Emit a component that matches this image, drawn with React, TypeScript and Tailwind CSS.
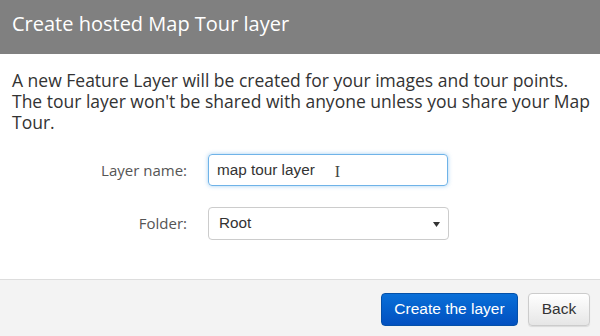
import React from "react";

export default function App() {
  return (
    <div className="w-[600px] h-[336px] bg-white flex flex-col overflow-hidden" style={{ fontFamily: '"Open Sans", sans-serif' }}>
      <div className="h-[54px] bg-[#808080] flex items-center px-[12px] shrink-0">
        <h1 className="text-white text-[20px] leading-none -mt-[6px]">Create hosted Map Tour layer</h1>
      </div>
      <div className="flex-1 flex flex-col">
        <p className="pl-[12px] pr-[8px] pt-[16px] text-[17.5px] leading-[21px] text-[#333]">
          A new Feature Layer will be created for your images and tour points.
          <br />
          The tour layer won't be shared with anyone unless you share your Map Tour.
        </p>
        <div className="mt-[21px] flex items-center">
          <label className="w-[208px] text-right pr-[21px] text-[15px] text-[#555]">Layer name:</label>
          <div className="w-[240px] h-[32px] rounded-[4px] border border-[#6fb3e8] shadow-[0_0_4px_rgba(102,175,233,0.6)] flex items-center pl-[8px] text-[15.3px] text-[#333]" style={{ fontFamily: '"Liberation Sans", Arial, sans-serif' }}>
            <span>map tour layer</span>
            <span className="ml-[20px] mt-[4px] text-[#444] text-[16px] leading-none" style={{ fontFamily: '"Liberation Serif", serif' }}>I</span>
          </div>
        </div>
        <div className="mt-[21px] flex items-center">
          <label className="w-[208px] text-right pr-[21px] text-[15px] text-[#555]">Folder:</label>
          <div className="w-[241px] h-[33px] rounded-[4px] border border-[#ccc] flex items-center justify-between px-[10px] text-[15.3px] text-[#333]" style={{ fontFamily: '"Liberation Sans", Arial, sans-serif' }}>
            <span>Root</span>
            <svg width="7" height="5" viewBox="0 0 7 5" className="mr-[-2px] mt-[1px]"><path d="M0 0 L7 0 L3.5 5 Z" fill="#333" /></svg>
          </div>
        </div>
      </div>
      <div className="h-[57px] shrink-0 border-t border-[#ddd] bg-[#f3f3f3] flex items-center justify-end gap-[10px] pr-[10px] pt-[2px]" style={{ fontFamily: '"Liberation Sans", Arial, sans-serif' }}>
        <button className="h-[33px] w-[137px] rounded-[4px] border border-[#0450a8] bg-gradient-to-b from-[#0a6fd8] to-[#0350c0] text-white text-[15.5px]">Create the layer</button>
        <button className="h-[33px] w-[62px] rounded-[4px] border border-[#ccc] bg-gradient-to-b from-white to-[#e6e6e6] text-[#333] text-[15.5px] shadow-[0_1px_1px_rgba(0,0,0,0.1)]">Back</button>
      </div>
    </div>
  );
}
